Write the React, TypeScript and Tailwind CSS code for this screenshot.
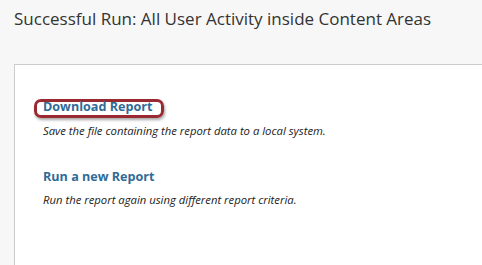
export default function App() {
  return (
    <div className="w-[482px] h-[265px] overflow-hidden bg-[#f7f7f7] font-['Open_Sans',sans-serif] text-[#222]">
      <div className="pl-[14px] pt-[7px] h-[64px]">
        <h1 className="text-[17px] leading-[24px] text-[#333]">Successful Run: All User Activity inside Content Areas</h1>
      </div>
      <div className="ml-[14px] border-l border-t border-[#cccccc] bg-white h-[201px] pl-[28px] pt-[28px]">
        <div className="relative inline-block">
          <span className="absolute -left-[9px] -right-[12px] top-[1px] -bottom-[2px] rounded-[7px] border-[3px] border-[#9a2a31] shadow-[1px_2px_3px_rgba(0,0,0,0.35)]"></span>
          <a className="relative block text-[12.6px] leading-[18px] font-bold text-[#2f6b96]">Download Report</a>
        </div>
        <p className="text-[11.3px] leading-[16px] italic text-[#222] mt-[6px]">Save the file containing the report data to a local system.</p>
        <div className="mt-[29px] text-[12.6px] leading-[18px] font-bold text-[#2f6b96]">Run a new Report</div>
        <p className="text-[11.3px] leading-[16px] italic text-[#222] mt-[6px]">Run the report again using different report criteria.</p>
      </div>
    </div>
  );
}
